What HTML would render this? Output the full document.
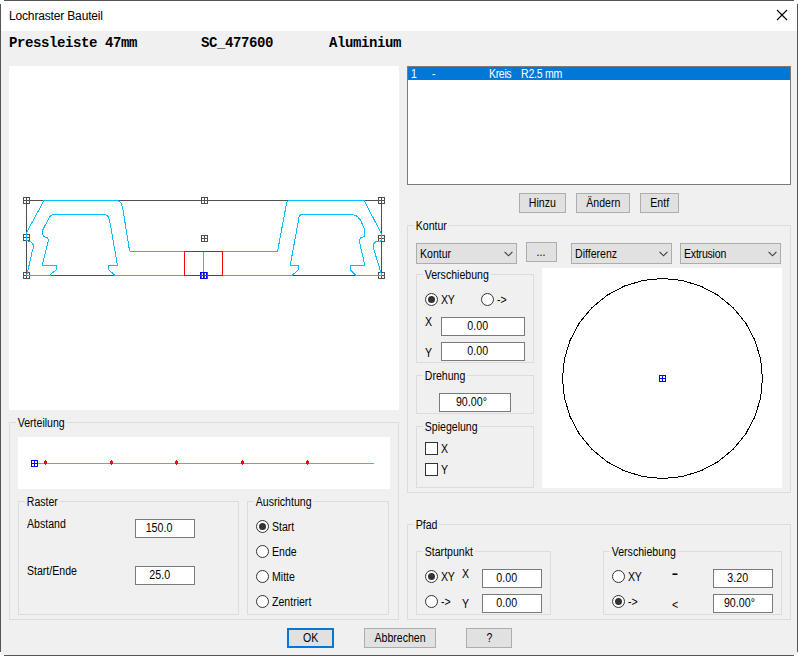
<!DOCTYPE html>
<html lang="de">
<head>
<meta charset="utf-8">
<title>Lochraster Bauteil</title>
<style>
html,body{margin:0;padding:0;}
body{width:798px;height:656px;position:relative;overflow:hidden;background:#fff;font-family:"Liberation Sans",sans-serif;font-size:12px;color:#000;}
.abs,.t,.gb,.in,.btn,.cmb,.rd,.ck,.pan{position:absolute;box-sizing:border-box;}
.t{white-space:nowrap;line-height:13px;height:13px;transform:scaleX(0.88);transform-origin:0 0;}
.gb{border:1px solid #dcdcdc;}
.gl{position:absolute;top:-6px;left:6.4px;padding:0 2px 0 2px;background:#f0f0f0;white-space:nowrap;line-height:13px;height:13px;transform:scaleX(0.88);transform-origin:0 0;}
.in{background:#fff;border:1px solid #7a7a7a;text-align:center;line-height:17px;padding-right:11px;white-space:nowrap;}
.btn{background:#e1e1e1;border:1px solid #adadad;text-align:center;line-height:18px;white-space:nowrap;}
.cmb{background:#e1e1e1;border:1px solid #adadad;line-height:19px;padding-left:3px;padding-top:1px;white-space:nowrap;}
.cmb svg{position:absolute;right:3.5px;top:7px;}
.rd{width:13px;height:13px;border-radius:50%;border:1px solid #333;background:#fff;}
.rd.on::after{content:"";position:absolute;left:2px;top:2px;width:7px;height:7px;border-radius:50%;background:#333;}
.ck{width:13px;height:13px;border:1px solid #333;background:#fff;}
.pan{background:#fff;}
.s{display:inline-block;transform:scaleX(0.88);}
.cmb .s{transform-origin:0 50%;}
.in .s{transform:scaleX(0.89);}
</style>
</head>
<body>
<!-- window frame -->
<div class="abs" style="left:1px;top:1px;width:795px;height:30px;background:#fff;"></div>
<div class="abs" style="left:1px;top:31px;width:796px;height:624px;background:#f0f0f0;"></div>
<div class="abs" style="left:4px;top:0;width:790px;height:1px;background:#555;"></div>
<div class="abs" style="left:4px;top:655px;width:790px;height:1px;background:#555;"></div>
<div class="abs" style="left:0;top:4px;width:1px;height:648px;background:#555;"></div>
<div class="abs" style="left:797px;top:4px;width:1px;height:648px;background:#555;"></div>

<!-- title bar -->
<div class="t" id="title" style="transform:none;left:9px;top:9px;font-size:12px;line-height:14px;height:14px;letter-spacing:-0.16px;">Lochraster Bauteil</div>
<svg class="abs" style="left:776px;top:9px;" width="12" height="12" viewBox="0 0 12 12"><path d="M1 1 L11 11 M11 1 L1 11" stroke="#000" stroke-width="1.1" fill="none"/></svg>

<!-- header mono text -->
<div class="t" id="mono" style="transform:none;left:9px;top:36px;font-family:'Liberation Mono',monospace;font-weight:bold;font-size:14px;line-height:15px;height:15px;letter-spacing:-0.4px;white-space:pre;">Pressleiste 47mm        SC_477600       Aluminium</div>

<!-- left preview panel -->
<div class="pan" style="left:9px;top:66px;width:390px;height:344px;"></div>
<svg class="abs" id="profile" style="left:9px;top:66px;" width="390" height="344" viewBox="9 66 390 344" shape-rendering="crispEdges">
<g fill="none" stroke="#505050">
<rect x="26.5" y="200.5" width="355" height="75"/>
</g>
<g fill="none" stroke="#505050">
<path d="M23.5,197.5h6v6h-6z M26.5,197.5v6 M23.5,200.5h6"/>
<path d="M201.5,197.5h6v6h-6z M204.5,197.5v6 M201.5,200.5h6"/>
<path d="M378.5,197.5h6v6h-6z M381.5,197.5v6 M378.5,200.5h6"/>
<path d="M23.5,234.5h6v6h-6z M26.5,234.5v6 M23.5,237.5h6"/>
<path d="M201.5,235.5h6v6h-6z M204.5,235.5v6 M201.5,238.5h6"/>
<path d="M378.5,235.5h6v6h-6z M381.5,235.5v6 M378.5,238.5h6"/>
<path d="M23.5,272.5h6v6h-6z M26.5,272.5v6 M23.5,275.5h6"/>
<path d="M378.5,272.5h6v6h-6z M381.5,272.5v6 M378.5,275.5h6"/>
</g>
<g fill="none" stroke="#00bfff">
<path d="M44,200.5 L26.5,232.6 V240.5 L28.5,241.3 L30.5,241.6 L32.5,243.5 L33.5,245.5 L33.5,248 L32.6,249.6 L27.1,274 L26.5,275.5 H50"/>
<path d="M44,200.5 H118 L121,202.8 L122.6,207.3 L129.4,250 L130.3,251.5 H184.5"/>
<path d="M53,214.5 H105.5 L108.1,216.4 L109.6,220.3 L117.4,264.9 L117.5,265.5 H108.3 V269.5 L112,272.7 L115.2,275.5"/>
<path d="M53,214.5 L49.8,216.4 L42.7,230 L42.3,233.9 L44,236.5 L47.2,237.7 L48.5,240.3 L42.3,264.9 L42.3,265.5 H56.9 V269.5 L52.4,272.7 L50,275.5"/>
<path d="M115.2,275.5 H184.5 M222.5,275.5 H292"/>
<path d="M222.5,251.5 H277.5 L286.8,202.1 L288.7,200.5 H364.1 L381.5,233.9 V240"/>
<path d="M381.5,240 L380.7,241 L376.1,241.6 L373.5,244.2 L373.5,248.1 L381.3,274 L381.5,275.5 H356.1"/>
<path d="M301,214.5 H352.8 L357.4,216.4 L360.6,220.3 L364.5,229.3 L364.5,236.5 L360.6,238 L359.3,241 L364.7,264.9 L364.7,265.5 H350.2 V269.5 L356.1,275.5"/>
<path d="M301,214.5 L298.8,217 L298,222.8 L290.5,263.7 L290.4,265.5 H298.8 V269.5 L292,275.5"/>
</g>
<path d="M201.5,272.5h6v6h-6z M204.5,272.5v6 M201.5,275.5h6" fill="none" stroke="#505050"/>
<path d="M200.5,272.5h6v6h-6z M203.5,272.5v6 M200.5,275.5h6" fill="none" stroke="#0000ff"/>
<rect x="184.5" y="251.5" width="38" height="24" fill="none" stroke="#ff0000"/>
<path d="M203.5,252 V272" stroke="#00ff00" fill="none"/>

</svg>

<!-- list box -->
<div class="abs" style="left:407px;top:66px;width:384px;height:119px;background:#fff;border:1px solid #7a7a7a;"></div>
<div class="abs" style="left:408px;top:67px;width:382px;height:13px;background:#0078d7;"></div>
<div class="t" style="left:411px;top:68px;color:#fff;">1</div>
<div class="t" style="left:432px;top:68px;color:#fff;">-</div>
<div class="t" style="left:489px;top:68px;color:#fff;letter-spacing:-0.4px;">Kreis</div>
<div class="t" style="left:521px;top:68px;color:#fff;letter-spacing:-0.28px;">R2.5 mm</div>

<div class="btn" style="left:519px;top:193px;width:47px;height:20px;"><span class="s">Hinzu</span></div>
<div class="btn" style="left:576px;top:193px;width:54px;height:20px;"><span class="s">Ändern</span></div>
<div class="btn" style="left:640px;top:193px;width:39px;height:20px;"><span class="s">Entf</span></div>

<!-- Kontur group -->
<div class="gb" style="left:407px;top:225px;width:384px;height:268px;"><span class="gl">Kontur</span></div>
<div class="cmb" style="left:416px;top:243px;width:101px;height:21px;"><span class="s">Kontur</span><svg width="9" height="6" viewBox="0 0 9 6"><path d="M0.6 0.8 L4.5 4.8 L8.4 0.8" stroke="#3a3a3a" stroke-width="1.05" fill="none"/></svg></div>
<div class="btn" style="left:526px;top:242px;width:31px;height:20px;"><span class="s">...</span></div>
<div class="cmb" style="left:571px;top:243px;width:101px;height:21px;"><span class="s">Differenz</span><svg width="9" height="6" viewBox="0 0 9 6"><path d="M0.6 0.8 L4.5 4.8 L8.4 0.8" stroke="#3a3a3a" stroke-width="1.05" fill="none"/></svg></div>
<div class="cmb" style="left:680px;top:243px;width:101px;height:21px;"><span class="s" style="letter-spacing:-0.25px;">Extrusion</span><svg width="9" height="6" viewBox="0 0 9 6"><path d="M0.6 0.8 L4.5 4.8 L8.4 0.8" stroke="#3a3a3a" stroke-width="1.05" fill="none"/></svg></div>

<div class="gb" style="left:416px;top:274px;width:118px;height:89px;"><span class="gl">Verschiebung</span></div>
<div class="rd on" style="left:425px;top:293px;"></div><div class="t" style="left:441px;top:294px;letter-spacing:-0.2px;">XY</div>
<div class="rd" style="left:481px;top:293px;"></div><div class="t" style="left:497px;top:294px;">-&gt;</div>
<div class="t" style="left:425px;top:316px;">X</div>
<div class="in" style="left:441px;top:317px;width:84px;height:19px;"><span class="s">0.00</span></div>
<div class="t" style="left:425px;top:347px;">Y</div>
<div class="in" style="left:441px;top:342px;width:84px;height:19px;"><span class="s">0.00</span></div>

<div class="gb" style="left:416px;top:375px;width:118px;height:39px;"><span class="gl">Drehung</span></div>
<div class="in" style="left:439px;top:393px;width:72px;height:19px;padding-right:7px;"><span class="s">90.00°</span></div>

<div class="gb" style="left:416px;top:426px;width:118px;height:62px;"><span class="gl">Spiegelung</span></div>
<div class="ck" style="left:425px;top:442px;"></div><div class="t" style="left:441px;top:443px;">X</div>
<div class="ck" style="left:425px;top:463px;"></div><div class="t" style="left:441px;top:464px;">Y</div>

<div class="pan" style="left:542px;top:268px;width:240px;height:220px;"></div>
<svg class="abs" style="left:542px;top:268px;" width="240" height="220" viewBox="542 268 240 220">
<polygon points="662.50,278.50 642.99,280.42 624.23,286.11 606.94,295.35 591.79,307.79 579.35,322.94 570.11,340.23 564.42,358.99 562.50,378.50 564.42,398.01 570.11,416.77 579.35,434.06 591.79,449.21 606.94,461.65 624.23,470.89 642.99,476.58 662.50,478.50 682.01,476.58 700.77,470.89 718.06,461.65 733.21,449.21 745.65,434.06 754.89,416.77 760.58,398.01 762.50,378.50 760.58,358.99 754.89,340.23 745.65,322.94 733.21,307.79 718.06,295.35 700.77,286.11 682.01,280.42" fill="none" stroke="#000" stroke-width="1" shape-rendering="crispEdges"/>
<g shape-rendering="crispEdges" stroke="#0000ff" fill="none"><rect x="659.5" y="375.5" width="6" height="6"/><path d="M662.5 375.5V381.5M659.5 378.5H665.5"/></g>
</svg>

<!-- Verteilung group -->
<div class="gb" style="left:9px;top:422px;width:390px;height:198px;"><span class="gl">Verteilung</span></div>
<div class="pan" style="left:18px;top:437px;width:372px;height:52px;"></div>
<svg class="abs" style="left:18px;top:437px;" width="372" height="51" viewBox="18 437 372 51" shape-rendering="crispEdges">
<path d="M37 463.5H374" stroke="#00ff00" fill="none"/>
<g fill="#ff0000" stroke="none"><path d="M45,460h1v1h1v3h-1v1h-1v-1h-1v-3h1z"/><path d="M111,460h1v1h1v3h-1v1h-1v-1h-1v-3h1z"/><path d="M176,460h1v1h1v3h-1v1h-1v-1h-1v-3h1z"/><path d="M242,460h1v1h1v3h-1v1h-1v-1h-1v-3h1z"/><path d="M307,460h1v1h1v3h-1v1h-1v-1h-1v-3h1z"/></g>
<g stroke="#0000ff" fill="none"><rect x="31.5" y="460.5" width="6" height="6"/><path d="M34.5 460.5V466.5M31.5 463.5H37.5"/></g>
</svg>

<div class="gb" style="left:18px;top:501px;width:221px;height:114px;"><span class="gl">Raster</span></div>
<div class="t" style="left:27px;top:518px;">Abstand</div>
<div class="in" style="left:135px;top:519px;width:60px;height:19px;"><span class="s">150.0</span></div>
<div class="t" style="left:27px;top:565px;">Start/Ende</div>
<div class="in" style="left:135px;top:566px;width:60px;height:19px;"><span class="s">25.0</span></div>

<div class="gb" style="left:247px;top:501px;width:142px;height:114px;"><span class="gl">Ausrichtung</span></div>
<div class="rd on" style="left:256px;top:520px;"></div><div class="t" style="left:272px;top:521px;">Start</div>
<div class="rd" style="left:256px;top:545px;"></div><div class="t" style="left:272px;top:546px;">Ende</div>
<div class="rd" style="left:256px;top:570px;"></div><div class="t" style="left:272px;top:571px;">Mitte</div>
<div class="rd" style="left:256px;top:595px;"></div><div class="t" style="left:272px;top:596px;">Zentriert</div>

<!-- Pfad group -->
<div class="gb" style="left:407px;top:524px;width:384px;height:96px;"><span class="gl">Pfad</span></div>
<div class="gb" style="left:416px;top:551px;width:135px;height:64px;"><span class="gl">Startpunkt</span></div>
<div class="rd on" style="left:425px;top:570px;"></div><div class="t" style="left:441px;top:571px;letter-spacing:-0.2px;">XY</div>
<div class="rd" style="left:425px;top:595px;"></div><div class="t" style="left:441px;top:596px;">-&gt;</div>
<div class="t" style="left:462px;top:568px;">X</div>
<div class="in" style="left:482px;top:569px;width:60px;height:19px;"><span class="s">0.00</span></div>
<div class="t" style="left:462px;top:598px;">Y</div>
<div class="in" style="left:482px;top:594px;width:60px;height:19px;"><span class="s">0.00</span></div>

<div class="gb" style="left:603px;top:551px;width:179px;height:64px;"><span class="gl">Verschiebung</span></div>
<div class="rd" style="left:612px;top:570px;"></div><div class="t" style="left:628px;top:571px;letter-spacing:-0.2px;">XY</div>
<div class="rd on" style="left:612px;top:595px;"></div><div class="t" style="left:628px;top:596px;">-&gt;</div>
<div class="t" style="left:671.5px;top:568px;font-weight:bold;letter-spacing:-1.4px;">--</div>
<div class="in" style="left:713px;top:569px;width:60px;height:19px;"><span class="s">3.20</span></div>
<div class="t" style="left:672px;top:599px;">&lt;</div>
<div class="in" style="left:713px;top:594px;width:60px;height:19px;padding-right:7px;"><span class="s">90.00°</span></div>

<!-- bottom buttons -->
<div class="btn" style="left:287px;top:628px;width:47px;height:20px;border:2px solid #0078d7;line-height:16px;"><span class="s">OK</span></div>
<div class="btn" style="left:364px;top:628px;width:72px;height:20px;"><span class="s">Abbrechen</span></div>
<div class="btn" style="left:466px;top:628px;width:46px;height:20px;"><span class="s">?</span></div>
</body>
</html>
